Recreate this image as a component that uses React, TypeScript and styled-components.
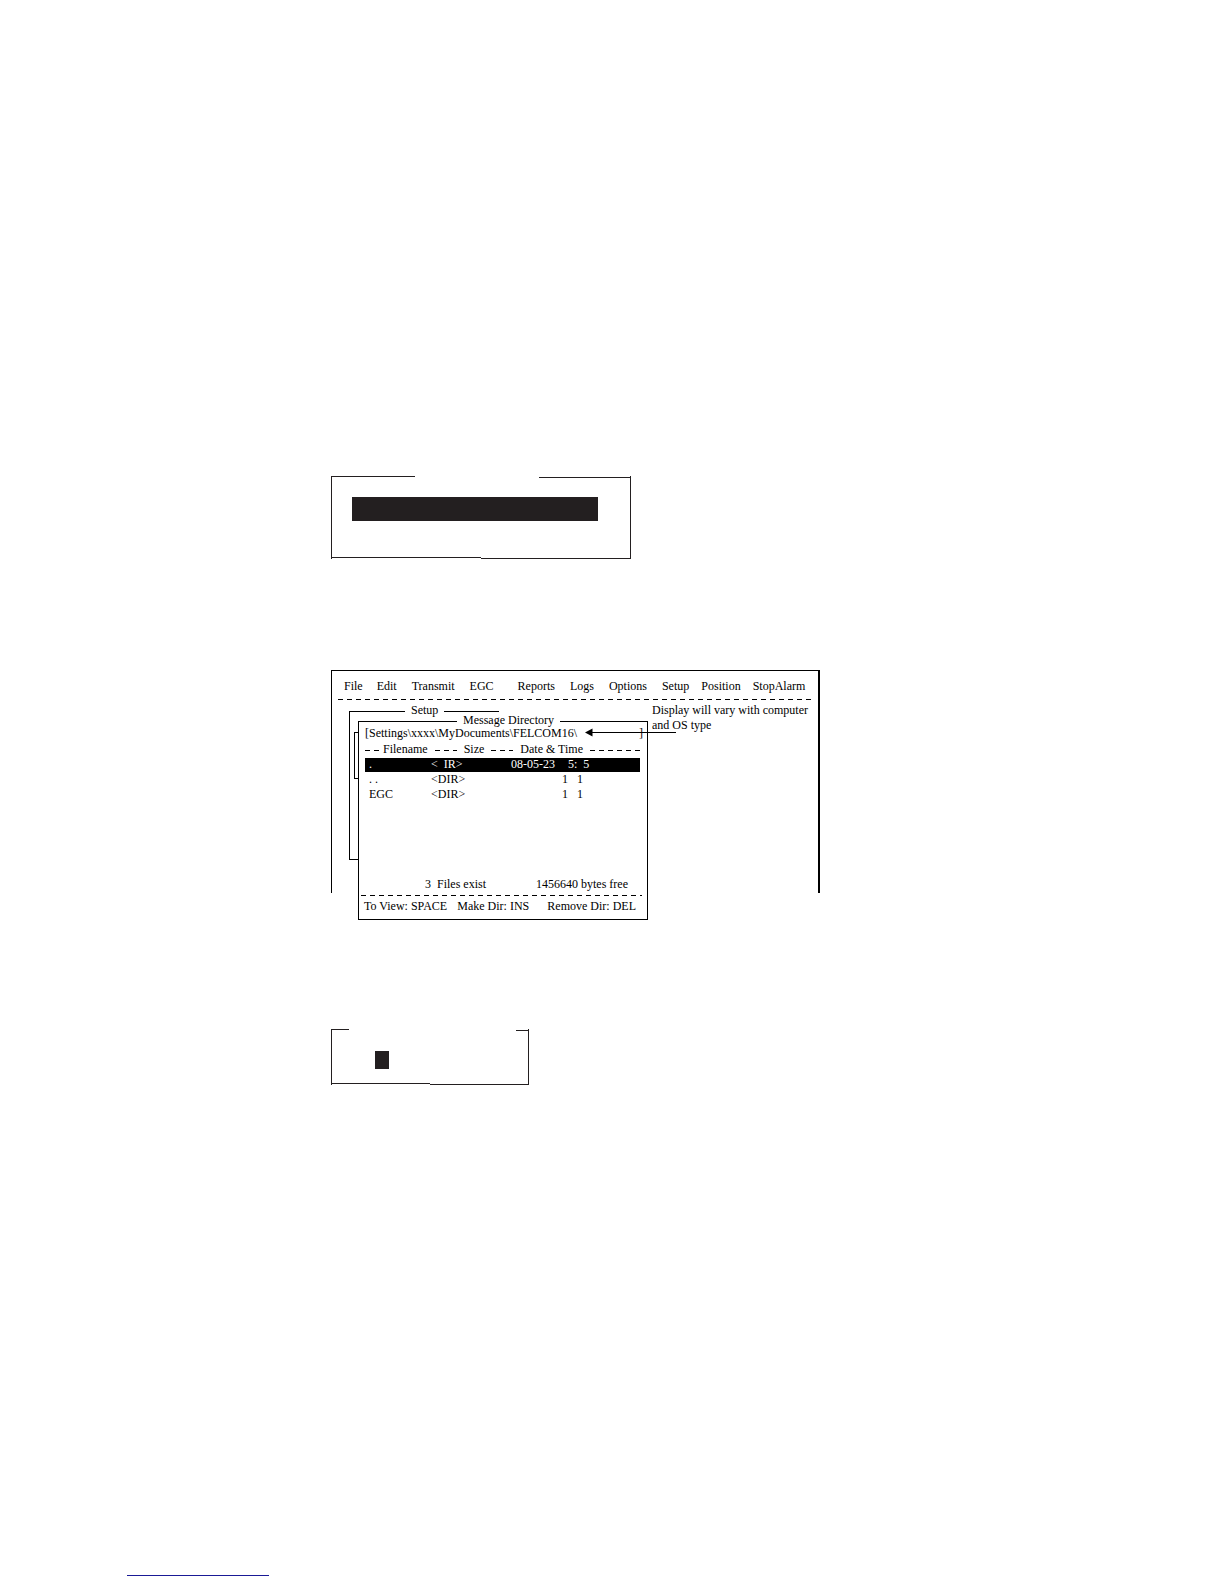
import React from 'react';
import styled, { createGlobalStyle } from 'styled-components';

const ink = '#231f20';

const GlobalStyle = createGlobalStyle`
  * {
    box-sizing: border-box;
  }
  body {
    margin: 0;
    background: #fff;
    color: #000;
    font: 12px/15px 'Liberation Serif', 'Times New Roman', serif;
  }
`;

const Page = styled.main`
  display: flex;
  flex-direction: column;
  align-items: flex-start;
  padding: 476px 40px 8px 331px;
`;

const dashes = `repeating-linear-gradient(to right, #000 0 5px, transparent 5px 9px)`;

/* Prompt boxes */

const Prompt = styled.section<{ $width: number }>`
  width: 100%;
  max-width: ${p => p.$width}px;
  border: solid ${ink};
  border-width: 0 1px;
`;

const Edge = styled.div`
  display: flex;
  justify-content: space-between;
  height: 2px;
`;

const Segment = styled.span<{ $width: string; $low?: boolean }>`
  width: ${p => p.$width};
  height: 1px;
  align-self: ${p => (p.$low ? 'flex-end' : 'flex-start')};
  background: ${ink};
`;

const PromptBody = styled.div<{ $pad: string }>`
  padding: ${p => p.$pad};
`;

const Highlight = styled.div`
  height: 24px;
  background: ${ink};
`;

const Cursor = styled.div`
  width: 14px;
  height: 18px;
  background: ${ink};
`;

/* Main screen */

const Screen = styled.section`
  position: relative;
  width: 100%;
  max-width: 489px;
  height: 223px;
  margin: 111px 0 136px;
  border: solid #000;
  border-width: 1px 2px 0 1px;
`;

const MenuBar = styled.nav`
  display: flex;
  padding: 8px 12px 5px;
`;

const MenuItem = styled.button<{ $gap: number }>`
  margin: 0 ${p => p.$gap}px 0 0;
  padding: 0;
  border: 0;
  background: none;
  color: inherit;
  font: inherit;
`;

const DashedLine = styled.div`
  height: 1px;
  margin: 0 6px;
  background: ${dashes};
`;

const Callout = styled.p`
  width: 160px;
  margin: 3px 0 0 320px;
`;

const Arrow = styled.svg`
  position: absolute;
  left: 253px;
  top: 57px;
`;

const SetupWindow = styled.div`
  position: absolute;
  left: 17px;
  top: 40px;
  width: 150px;
  height: 149px;
  border: solid #000;
  border-width: 0 0 1px 1px;
`;

const SubWindow = styled.div`
  position: absolute;
  left: 22px;
  top: 61px;
  width: 10px;
  height: 47px;
  border: solid #000;
  border-width: 1px 0 1px 1px;
`;

const DirectoryWindow = styled.div`
  position: absolute;
  left: 26px;
  top: 50px;
  width: 290px;
  height: 199px;
  display: flex;
  flex-direction: column;
  border: solid #000;
  border-width: 0 1px 1px;
  background: #fff;
`;

const Title = styled.div`
  display: flex;
  gap: 6px;
  margin-top: -8px;
`;

const Rule = styled.span<{ $width?: number }>`
  flex: ${p => (p.$width ? `0 0 ${p.$width}px` : 1)};
  height: 1px;
  margin-top: 8px;
  background: #000;
`;

const Path = styled.div`
  display: flex;
  justify-content: space-between;
  margin-top: -2px;
  padding: 0 4px 0 6px;
`;

const Listing = styled.table`
  display: flex;
  flex-direction: column;
  margin: 1px 7px 0 6px;
`;

const ListingHead = styled.thead`
  display: block;
`;

const ListingBody = styled.tbody`
  display: block;
`;

const HeadRow = styled.tr`
  display: flex;
  height: 15px;
`;

const Head = styled.th`
  display: flex;
  flex: none;
  padding: 0;
  font-weight: normal;
  line-height: 15px;

  &:last-child {
    flex: 1;
  }
`;

const HeadDash = styled.span<{ $width?: number }>`
  flex: ${p => (p.$width ? `0 0 ${p.$width}px` : 1)};
  height: 1px;
  margin: 8px 7px 0 7px;
  background: ${dashes};

  ${Head}:first-child &:first-child {
    margin-left: 0;
    margin-right: 4px;
  }
  ${Head}:last-child &:last-child {
    margin-right: 0;
  }
`;

const Row = styled.tr<{ $selected?: boolean }>`
  display: flex;
  height: 15px;
  border-top: 1px solid #fff;
  padding-left: 4px;
  background: ${p => (p.$selected ? '#000' : 'none')};
  color: ${p => (p.$selected ? '#fff' : 'inherit')};
`;

const Cell = styled.td<{ $width: number }>`
  width: ${p => p.$width}px;
  padding: 0;
  line-height: 12px;
  white-space: pre;
`;

const Summary = styled.div`
  display: flex;
  justify-content: space-between;
  margin-top: auto;
  padding: 0 19px 3px 66px;
  white-space: pre;
`;

const Actions = styled.div`
  display: flex;
  justify-content: space-between;
  padding: 3px 11px 5px 5px;
`;

const WindowDashes = styled(DashedLine)`
  margin: 0 5px 0 2px;
`;

const FooterLink = styled.a`
  width: 142px;
  height: 16px;
  margin: 475px 0 0 -204px;
  border-bottom: 1px solid #1a1a96;
`;

const menu = [
  { label: 'File', gap: 14 },
  { label: 'Edit', gap: 15 },
  { label: 'Transmit', gap: 15 },
  { label: 'EGC', gap: 24 },
  { label: 'Reports', gap: 15 },
  { label: 'Logs', gap: 15 },
  { label: 'Options', gap: 15 },
  { label: 'Setup', gap: 12 },
  { label: 'Position', gap: 12 },
  { label: 'StopAlarm', gap: 0 },
];

const files = [
  { name: '.', size: '<  IR>', date: '08-05-23', time: '  5:  5' },
  { name: '. .', size: '<DIR>', date: '', time: '1   1' },
  { name: 'EGC', size: '<DIR>', date: '', time: '1   1' },
];

const Directory = () => (
  <DirectoryWindow>
    <Title>
      <Rule $width={98} />
      Message Directory
      <Rule />
    </Title>
    <Path>
      <span>[Settings\xxxx\MyDocuments\FELCOM16\</span>
      <span>]</span>
    </Path>
    <Listing>
      <ListingHead>
        <HeadRow>
          <Head>
            <HeadDash $width={14} />
            Filename
            <HeadDash $width={22} />
          </Head>
          <Head>
            Size
            <HeadDash $width={22} />
          </Head>
          <Head>
            Date &amp; Time
            <HeadDash />
          </Head>
        </HeadRow>
      </ListingHead>
      <ListingBody>
        {files.map((file, i) => (
          <Row key={file.name} $selected={i === 0}>
            <Cell $width={62}>{file.name}</Cell>
            <Cell $width={80}>{file.size}</Cell>
            <Cell $width={51}>{file.date}</Cell>
            <Cell $width={40}>{file.time}</Cell>
          </Row>
        ))}
      </ListingBody>
    </Listing>
    <Summary>
      <span>{'3  Files exist'}</span>
      <span>1456640 bytes free</span>
    </Summary>
    <WindowDashes />
    <Actions>
      <MenuItem $gap={0}>To View: SPACE</MenuItem>
      <MenuItem $gap={8}>Make Dir: INS</MenuItem>
      <MenuItem $gap={0}>Remove Dir: DEL</MenuItem>
    </Actions>
  </DirectoryWindow>
);

const App = () => (
  <>
    <GlobalStyle />
    <Page>
      <Prompt $width={300}>
        <Edge>
          <Segment $width="83px" />
          <Segment $width="91px" $low />
        </Edge>
        <PromptBody $pad="19px 32px 36px 20px">
          <Highlight />
        </PromptBody>
        <Edge>
          <Segment $width="50%" />
          <Segment $width="50%" $low />
        </Edge>
      </Prompt>

      <Screen>
        <MenuBar>
          {menu.map(item => (
            <MenuItem key={item.label} $gap={item.gap}>
              {item.label}
            </MenuItem>
          ))}
        </MenuBar>
        <DashedLine />
        <Callout>Display will vary with computer and OS type</Callout>
        <SetupWindow>
          <Title>
            <Rule $width={55} />
            Setup
            <Rule />
          </Title>
        </SetupWindow>
        <SubWindow />
        <Directory />
        <Arrow width="92" height="9" viewBox="0 0 92 9">
          <path d="M7 4h84v1H7z" />
          <path d="M0 4.5 7.5 0.5v8z" />
        </Arrow>
      </Screen>

      <Prompt $width={198}>
        <Edge>
          <Segment $width="17px" />
          <Segment $width="12px" $low />
        </Edge>
        <PromptBody $pad="20px 43px 14px">
          <Cursor />
        </PromptBody>
        <Edge>
          <Segment $width="50%" />
          <Segment $width="50%" $low />
        </Edge>
      </Prompt>

      <FooterLink href="#" aria-label="Footer link" />
    </Page>
  </>
);

export default App;
